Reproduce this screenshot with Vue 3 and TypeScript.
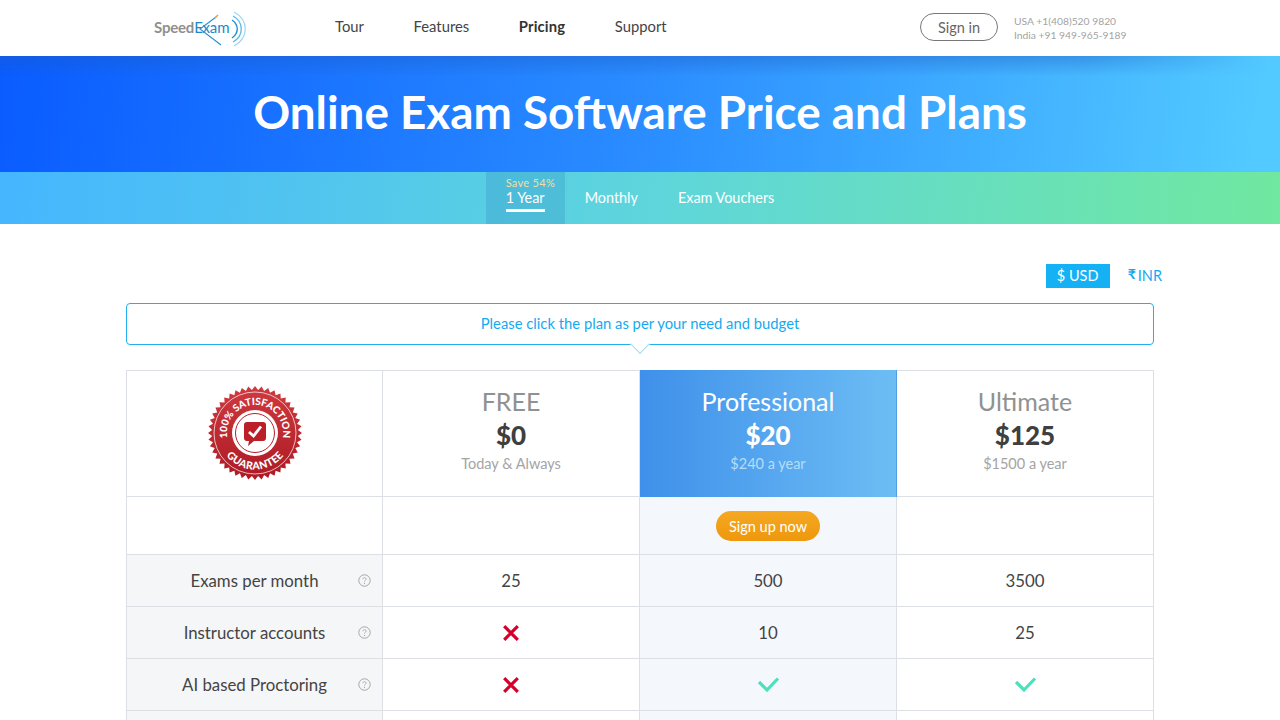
<script setup lang="ts">
const navLinks = [
  { label: 'Tour', active: false },
  { label: 'Features', active: false },
  { label: 'Pricing', active: true },
  { label: 'Support', active: false },
];

const plans = [
  { name: 'FREE', price: '$0', note: 'Today & Always', featured: false },
  { name: 'Professional', price: '$20', note: '$240 a year', featured: true },
  { name: 'Ultimate', price: '$125', note: '$1500 a year', featured: false },
];

type Cell = string | 'yes' | 'no';

const rows: { label: string; cells: Cell[] }[] = [
  { label: 'Exams per month', cells: ['25', '500', '3500'] },
  { label: 'Instructor accounts', cells: ['no', '10', '25'] },
  { label: 'AI based Proctoring', cells: ['no', 'yes', 'yes'] },
];

function starPoints(cx: number, cy: number, outer: number, inner: number, teeth: number) {
  const pts: string[] = [];
  for (let i = 0; i < teeth * 2; i++) {
    const r = i % 2 ? inner : outer;
    const a = (Math.PI * i) / teeth;
    pts.push(`${(cx + r * Math.cos(a)).toFixed(2)},${(cy + r * Math.sin(a)).toFixed(2)}`);
  }
  return pts.join(' ');
}

const burst = starPoints(47, 47, 47, 43, 44);
</script>

<template>
  <div class="page">
    <header class="topbar">
      <a class="logo">
        <span class="logo-speed">Speed</span><span class="logo-exam">Exam</span>
        <svg class="logo-mark" width="54" height="36" viewBox="0 0 54 36" fill="none">
          <path d="M19 6 L3 18 L24 34" stroke="#2b8fd0" stroke-width="1.1" />
          <path d="M21 4 L18 7" stroke="#e8a33a" stroke-width="1.6" />
          <path d="M37 1 C52 9 52 27 37 35" stroke="#9ad6f4" stroke-width="1.2" />
          <path d="M36 5 C47 11 47 25 36 31" stroke="#5ab6e8" stroke-width="1.3" />
          <path d="M35 9 C42 14 42 22 35 27" stroke="#1f8ed6" stroke-width="1.4" />
        </svg>
      </a>
      <nav class="nav">
        <a v-for="link in navLinks" :key="link.label" :class="{ active: link.active }">{{ link.label }}</a>
      </nav>
      <a class="signin">Sign in</a>
      <div class="phones">
        <div>USA +1(408)520 9820</div>
        <div>India +91 949-965-9189</div>
      </div>
    </header>

    <section class="hero">
      <h1>Online Exam Software Price and Plans</h1>
    </section>

    <section class="tabs">
      <a class="tab current">
        <small>Save 54%</small>
        <span>1 Year</span>
      </a>
      <a class="tab">Monthly</a>
      <a class="tab">Exam Vouchers</a>
    </section>

    <main class="content">
      <div class="currency">
        <a class="cur selected">$ USD</a>
        <a class="cur inr"><i>₹</i>INR</a>
      </div>

      <div class="hint">
        Please click the plan as per your need and budget
        <span class="hint-arrow"></span>
      </div>

      <div class="grid">
        <div class="cell badge-cell">
          <svg width="94" height="94" viewBox="0 0 94 94">
            <defs>
              <linearGradient id="seal" x1="0" y1="0" x2="0" y2="1">
                <stop offset="0" stop-color="#cf3a40" />
                <stop offset="1" stop-color="#ad1a24" />
              </linearGradient>
              <path id="arc-top" d="M20.5 56 a28 28 0 1 1 53 0" />
              <path id="arc-bottom" d="M10.5 47 a36.5 36.5 0 0 0 73 0" />
            </defs>
            <polygon :points="burst" fill="url(#seal)" />
            <circle cx="47" cy="47" r="41" fill="none" stroke="#fff" stroke-width="0.7" />
            <text class="seal-text"><textPath href="#arc-top" startOffset="50%" text-anchor="middle">100% SATISFACTION</textPath></text>
            <text class="seal-text seal-low"><textPath href="#arc-bottom" startOffset="50%" text-anchor="middle">GUARANTEE</textPath></text>
            <circle cx="47" cy="47" r="23" fill="#fff" />
            <circle cx="47" cy="47" r="19.5" fill="none" stroke="#b8202a" stroke-width="1" />
            <path d="M39 36 H55 Q58 36 58 39 V52 Q58 55 55 55 H46 L40 60 L41 55 H39 Q36 55 36 52 V39 Q36 36 39 36 Z" fill="#bb2029" />
            <path d="M41 46 L45.5 50 L53 40.5" fill="none" stroke="#fff" stroke-width="2.8" />
          </svg>
        </div>
        <div
          v-for="plan in plans"
          :key="plan.name"
          class="cell plan"
          :class="{ featured: plan.featured }"
        >
          <div class="plan-name">{{ plan.name }}</div>
          <div class="plan-price">{{ plan.price }}</div>
          <div class="plan-note">{{ plan.note }}</div>
        </div>

        <div class="cell cta"></div>
        <div class="cell cta"></div>
        <div class="cell cta tint"><a class="signup">Sign up now</a></div>
        <div class="cell cta"></div>

        <template v-for="row in rows" :key="row.label">
          <div class="cell label">
            {{ row.label }}
            <svg class="help" width="13" height="13" viewBox="0 0 13 13" fill="none">
              <circle cx="6.5" cy="6.5" r="5.7" stroke="#a6a6a6" />
              <path d="M4.9 5.2 C4.9 3.2 8.1 3.2 8.1 5.1 C8.1 6.3 6.5 6.3 6.5 7.6" stroke="#a6a6a6" stroke-width="0.9" />
              <circle cx="6.5" cy="9.4" r="0.6" fill="#a6a6a6" />
            </svg>
          </div>
          <div
            v-for="(value, i) in row.cells"
            :key="i"
            class="cell value"
            :class="{ tint: i === 1 }"
          >
            <svg v-if="value === 'no'" width="18" height="18" viewBox="0 0 18 18" fill="none">
              <path d="M2.2 2.2 L15.8 15.8 M15.8 2.2 L2.2 15.8" stroke="#d5002a" stroke-width="3.2" />
            </svg>
            <svg v-else-if="value === 'yes'" width="23" height="17" viewBox="0 0 23 17" fill="none">
              <path d="M2 6 L10 14 L21 2.5" stroke="#4ce0bc" stroke-width="3.2" />
            </svg>
            <template v-else>{{ value }}</template>
          </div>
        </template>

        <div class="cell label"></div>
        <div class="cell value"></div>
        <div class="cell value tint"></div>
        <div class="cell value"></div>
      </div>
    </main>
  </div>
</template>

<style>
html,
body {
  margin: 0;
  overflow: hidden;
}
</style>

<style scoped>
.page {
  width: 1280px;
  height: 720px;
  overflow: hidden;
  background: #fff;
  font-family: Lato, 'Noto Sans', sans-serif;
  color: #444;
}

.topbar {
  height: 56px;
  display: flex;
  align-items: center;
  padding-left: 154px;
}

.logo {
  position: relative;
  width: 181px;
  font-size: 15px;
  letter-spacing: -0.2px;
  margin-top: -3px;
}

.logo-speed {
  color: #8f8f8f;
  font-weight: 700;
}

.logo-exam {
  color: #1f86c8;
}

.logo-mark {
  position: absolute;
  left: 43px;
  top: -7px;
}

.nav {
  width: 332px;
  display: flex;
  gap: 49.6px;
  font-size: 14.8px;
  color: #444;
  margin-top: -4px;
}

.nav .active {
  font-weight: 700;
  letter-spacing: 0.15px;
  color: #333;
}

.signin {
  margin-left: 253px;
  width: 78px;
  height: 28px;
  box-sizing: border-box;
  display: flex;
  align-items: center;
  justify-content: center;
  border: 1px solid #777;
  border-radius: 14px;
  font-size: 14.5px;
  color: #666;
  margin-top: -2px;
}

.phones {
  margin-left: 16px;
  font-size: 10.3px;
  line-height: 14px;
  color: #a3a3a3;
  margin-top: -1px;
}

.hero {
  position: relative;
  height: 116px;
  display: flex;
  align-items: center;
  justify-content: center;
  background: linear-gradient(97deg, #0a5cff 0%, #2a8cff 50%, #52caff 98%);
}

.hero::before {
  content: '';
  position: absolute;
  left: 0;
  right: 0;
  top: 0;
  height: 20px;
  background: linear-gradient(180deg, rgba(30, 90, 190, 0.38), rgba(30, 90, 190, 0));
  -webkit-mask-image: linear-gradient(90deg, #000 85%, transparent 99%);
  mask-image: linear-gradient(90deg, #000 85%, transparent 99%);
}

.hero h1 {
  margin: 0 0 6px;
  font-size: 45.8px;
  font-weight: 700;
  color: #fff;
  position: relative;
}

.tabs {
  height: 52px;
  display: flex;
  justify-content: center;
  background: linear-gradient(95deg, #45b6ff 0%, #5ed5dc 50%, #70e8a0 100%);
}

.tab {
  display: flex;
  align-items: center;
  padding: 0 20px;
  font-size: 14.4px;
  color: #fff;
  margin-top: -2px;
}

.tab.current {
  flex-direction: column;
  align-items: flex-start;
  width: 79px;
  box-sizing: border-box;
  padding-right: 0;
  margin-top: 0;
  background: rgba(40, 130, 190, 0.25);
}

.tab.current small {
  font-size: 11px;
  letter-spacing: 0.3px;
  color: #f4dca0;
  margin-top: 5px;
  line-height: 12px;
}

.tab.current span {
  line-height: 17px;
  padding-bottom: 3px;
  border-bottom: 3px solid #fff;
}

.content {
  width: 1028px;
  margin: 0 auto;
}

.currency {
  display: flex;
  justify-content: flex-end;
  align-items: center;
  margin-top: 40px;
  height: 24px;
  margin-right: -8px;
  gap: 18px;
  font-size: 14.5px;
  color: #14aaf0;
}

.cur.selected {
  background: #14b1f5;
  color: #fff;
  width: 64px;
  height: 24px;
  padding-bottom: 1px;
  box-sizing: border-box;
  display: flex;
  align-items: center;
  justify-content: center;
}

.cur.inr {
  display: flex;
  align-items: center;
  padding-bottom: 1px;
}

.inr i {
  font-style: normal;
  font-size: 14px;
  font-weight: 700;
  line-height: 14px;
  margin-right: 2px;
  margin-top: -4px;
}

.hint {
  position: relative;
  margin-top: 15px;
  height: 42px;
  box-sizing: border-box;
  padding-bottom: 3px;
  display: flex;
  align-items: center;
  justify-content: center;
  border: 1px solid #21b0ee;
  border-radius: 4px;
  font-size: 14.8px;
  color: #14aaf0;
}

.hint-arrow {
  position: absolute;
  left: calc(50% - 7px);
  bottom: -7px;
  width: 14px;
  height: 14px;
  box-sizing: border-box;
  background: #fff;
  border-right: 1px solid #9fdcf5;
  border-bottom: 1px solid #9fdcf5;
  transform: rotate(45deg);
}

.grid {
  margin-top: 25px;
  display: grid;
  grid-template-columns: 256px 257px 257px 257px;
  grid-template-rows: 126px 58px 52px 52px 52px 52px;
  border-top: 1px solid #dcdfe3;
  border-left: 1px solid #dcdfe3;
  box-sizing: border-box;
}

.cell {
  box-sizing: border-box;
  border-right: 1px solid #dcdfe3;
  border-bottom: 1px solid #dcdfe3;
  display: flex;
  align-items: center;
  justify-content: center;
  position: relative;
}

.badge-cell svg {
  margin-top: -2px;
}

.seal-text {
  font-size: 10px;
  font-weight: 900;
  fill: #fff;
}

.seal-low {
  font-size: 10.5px;
  letter-spacing: 0.3px;
}

.plan {
  flex-direction: column;
  justify-content: flex-start;
  padding-top: 15px;
  color: #3f3f3f;
}

.plan-name {
  font-size: 25px;
  line-height: 30px;
  color: #919191;
}

.plan-price {
  font-size: 26px;
  font-weight: 900;
  line-height: 34px;
  margin-top: 2px;
}

.plan-note {
  font-size: 14.5px;
  line-height: 20px;
  color: #a4a4a4;
  margin-top: 2px;
}

.plan.featured {
  background: linear-gradient(90deg, #3e90ea 0%, #6dbdf4 100%);
  border-right-color: #4f9de4;
  border-bottom: none;
  margin-top: -1px;
  padding-top: 16px;
  color: #fff;
}

.plan.featured .plan-name {
  color: #fff;
}

.plan.featured .plan-note {
  color: #b7dcf8;
}

.tint {
  background: #f4f8fd;
}

.cta {
  padding-top: 1px;
}

.signup {
  width: 104px;
  height: 30px;
  display: flex;
  align-items: center;
  justify-content: center;
  border-radius: 15px;
  background: linear-gradient(180deg, #f5a823, #ee980c);
  font-size: 14.5px;
  color: #fff;
}

.label {
  background: #f5f6f8;
  font-size: 16.8px;
  color: #444;
}

.help {
  position: absolute;
  right: 11px;
  top: 19px;
}

.value {
  font-size: 16.8px;
  color: #444;
}
</style>
